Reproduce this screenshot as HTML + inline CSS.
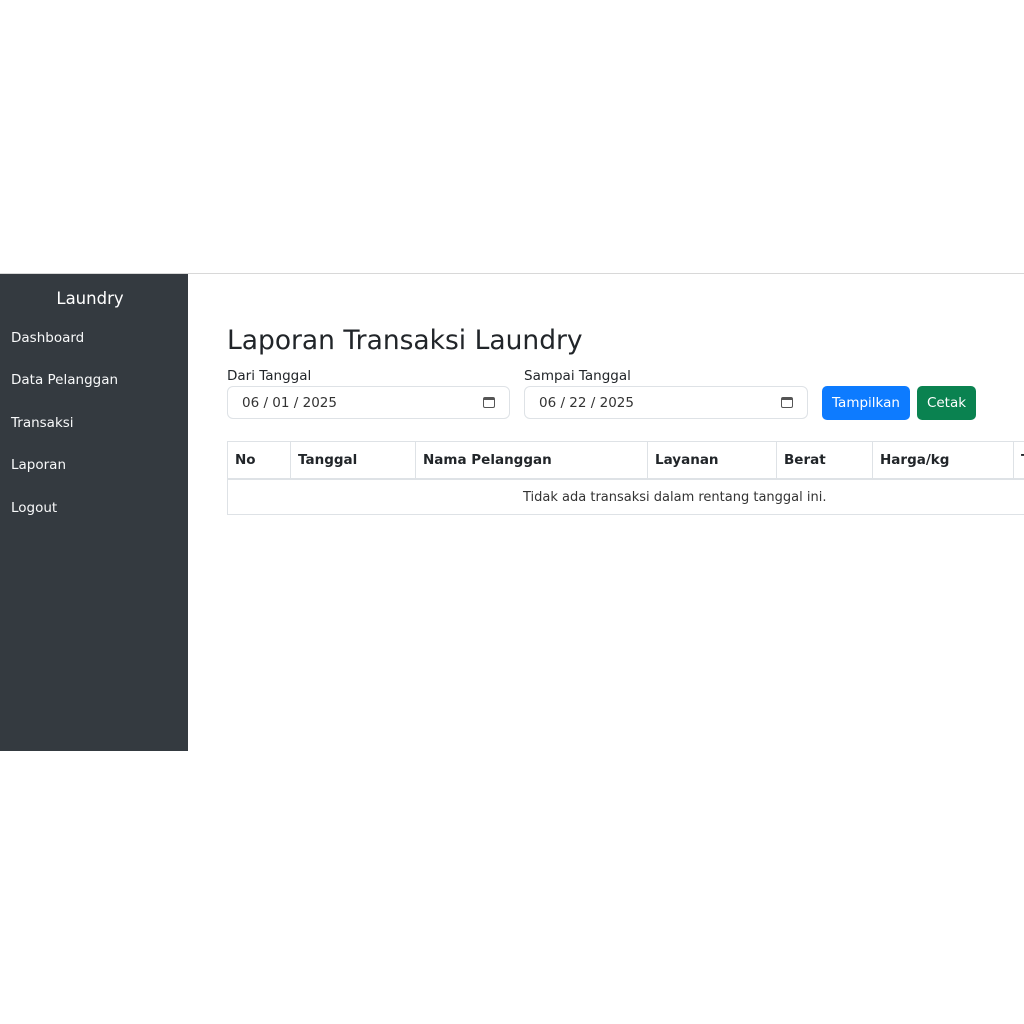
<!DOCTYPE html>
<html><head><style>
body{margin:0;width:1024px;height:1024px;background:#fff;position:relative;overflow:hidden;font-family:"DejaVu Sans","Liberation Sans",sans-serif;color:#212529}
.a{position:absolute;white-space:nowrap}
.side{left:0;top:274px;width:188px;height:477px;background:#343a40}
.side .a{color:#f8f9fa;font-size:13.5px;left:11px}
.inp{height:33px;border:1px solid #dee2e6;border-radius:6px;box-sizing:border-box;font-size:13.5px;line-height:32px;padding-left:14px;color:#333}
.cal{position:absolute;right:14px;top:10px;width:12px;height:11px;border:1.5px solid #555;border-top-width:3px;border-radius:2px;box-sizing:border-box}
table{position:absolute;left:227px;top:441px;border-collapse:collapse;font-size:13.5px;table-layout:fixed;width:850px}
td,th{border:1px solid #dee2e6;padding:0 7px;height:36px;text-align:left;overflow:hidden;white-space:nowrap}
th{border-bottom:2px solid #dee2e6}
</style></head><body>
<div class="a" style="left:0;top:273px;width:1024px;height:1px;background:#d8d8d8"></div>
<div class="a side">
<div class="a" style="left:0;width:180px;text-align:center;top:15px;font-size:16.5px;color:#fff">Laundry</div>
<div class="a" style="top:56px">Dashboard</div>
<div class="a" style="top:98px">Data Pelanggan</div>
<div class="a" style="top:141px">Transaksi</div>
<div class="a" style="top:183px">Laporan</div>
<div class="a" style="top:226px">Logout</div>
</div>
<div class="a" style="left:227px;top:325px;font-size:26.5px">Laporan Transaksi Laundry</div>
<div class="a" style="left:227px;top:368px;font-size:13.5px">Dari Tanggal</div>
<div class="a" style="left:524px;top:368px;font-size:13.5px">Sampai Tanggal</div>
<div class="a inp" style="left:227px;top:386px;width:283px">06 / 01 / 2025<div class="cal"></div></div>
<div class="a inp" style="left:524px;top:386px;width:284px">06 / 22 / 2025<div class="cal"></div></div>
<div class="a" style="left:822px;top:386px;width:88px;height:34px;background:#0d7bff;border-radius:5px;color:#fff;font-size:13.5px;line-height:34px;text-align:center">Tampilkan</div>
<div class="a" style="left:917px;top:386px;width:59px;height:34px;background:#0a8250;border-radius:5px;color:#fff;font-size:13.5px;line-height:34px;text-align:center">Cetak</div>
<table>
<colgroup><col style="width:63px"><col style="width:125px"><col style="width:232px"><col style="width:129px"><col style="width:96px"><col style="width:141px"><col></colgroup>
<tr><th>No</th><th>Tanggal</th><th>Nama Pelanggan</th><th>Layanan</th><th>Berat</th><th>Harga/kg</th><th>Total</th></tr>
<tr><td colspan="7" style="text-align:left;padding-left:295px;font-size:13px;color:#333;height:34px">Tidak ada transaksi dalam rentang tanggal ini.</td></tr>
</table>
</body></html>
